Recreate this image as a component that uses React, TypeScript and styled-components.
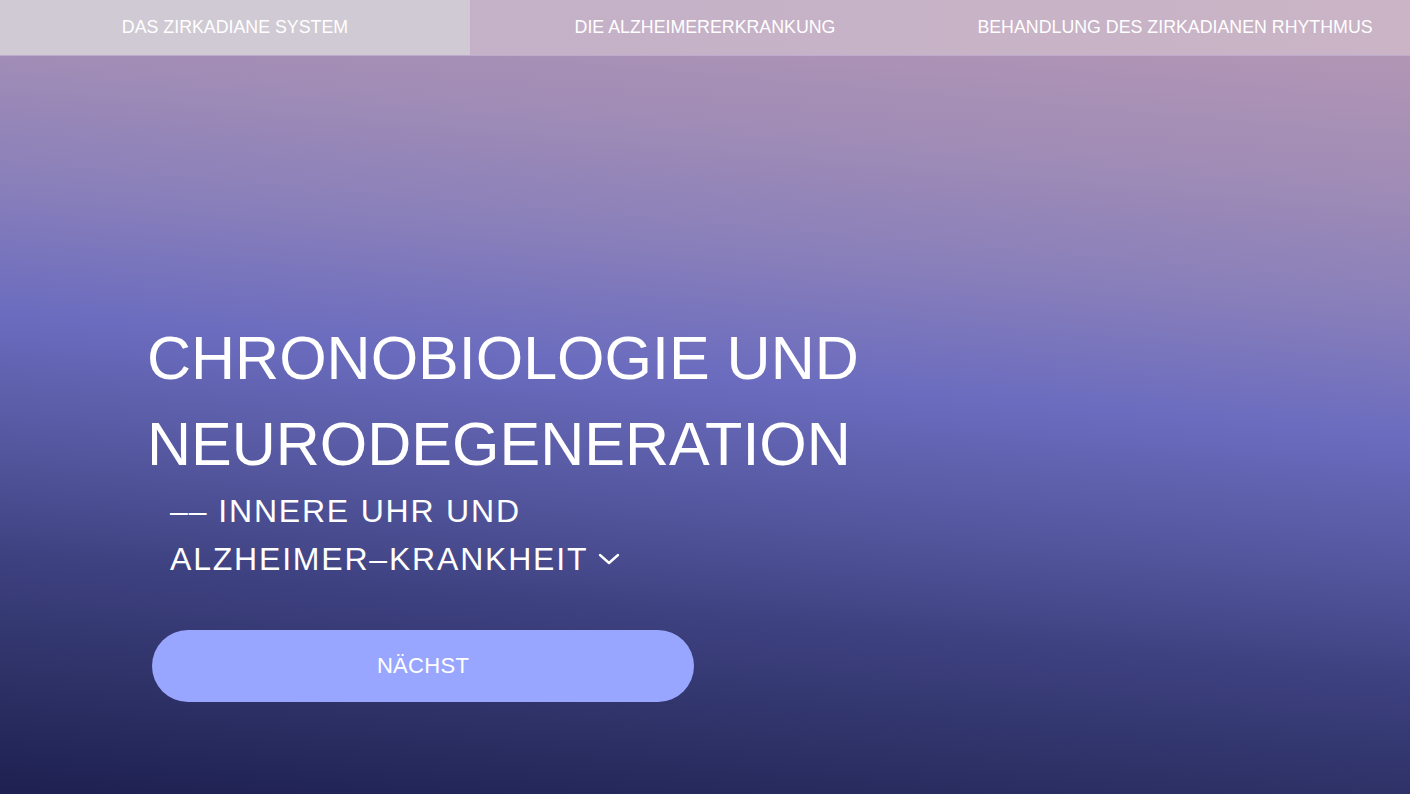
import React from "react";
import styled, { createGlobalStyle } from "styled-components";

const GlobalStyle = createGlobalStyle`
  html, body {
    margin: 0;
    padding: 0;
  }
  body {
    font-family: "Liberation Sans", Arial, sans-serif;
    color: #ffffff;
  }
  * { box-sizing: border-box; }
`;

const Page = styled.div`
  width: 100%;
  height: 794px;
  overflow: hidden;
  display: flex;
  flex-direction: column;
  background: linear-gradient(
    185deg,
    #b698b4 0%,
    #b195b5 7%,
    #a08cb6 20%,
    #8a80ba 33%,
    #6b6cbf 47.6%,
    #54579e 62%,
    #3e4180 74%,
    #2e3267 86.6%,
    #1d2050 100%
  );
`;

const Nav = styled.nav`
  display: grid;
  grid-template-columns: repeat(3, 1fr);
  height: 56px;
  background: linear-gradient(90deg, #c1aec8 0%, #c6b2c7 50%, #cab4c6 100%);
  border-bottom: 1px solid rgba(190, 170, 205, 0.9);
`;

const Tab = styled.a<{ $active?: boolean }>`
  display: flex;
  align-items: center;
  justify-content: center;
  padding-bottom: 1px;
  font-size: 17.8px;
  color: #ffffff;
  text-decoration: none;
  background: ${(p) => (p.$active ? "#cfcad3" : "transparent")};
  cursor: pointer;
`;

const Hero = styled.main`
  display: flex;
  flex-direction: column;
  align-items: flex-start;
  padding: 259px 0 0 147px;
`;

const Title = styled.h1`
  margin: 0;
  font-size: 61px;
  line-height: 86px;
  font-weight: 400;
  color: #ffffff;
`;

const Subtitle = styled.p`
  margin: 0;
  padding-left: 23px;
  font-size: 32px;
  line-height: 48px;
  letter-spacing: 1.8px;
  color: #ffffff;
`;

const Dash = styled.span`
  letter-spacing: 1px;
`;

const Chevron = styled.svg`
  display: inline-block;
  width: 22px;
  height: 14px;
  margin-left: 10px;
  vertical-align: 4px;
`;

const NextButton = styled.button`
  margin: 47px 0 0 5px;
  width: 542px;
  height: 72px;
  border: none;
  border-radius: 36px;
  background: #99a6ff;
  color: #ffffff;
  font-family: "Liberation Sans", Arial, sans-serif;
  font-size: 22px;
  letter-spacing: 0.3px;
  cursor: pointer;
  padding: 0 0 1px 0;
`;

export default function App() {
  return (
    <>
      <GlobalStyle />
      <Page>
        <Nav>
          <Tab $active>DAS ZIRKADIANE SYSTEM</Tab>
          <Tab>DIE ALZHEIMERERKRANKUNG</Tab>
          <Tab>BEHANDLUNG DES ZIRKADIANEN RHYTHMUS</Tab>
        </Nav>
        <Hero>
          <Title>
            CHRONOBIOLOGIE UND
            <br />
            NEURODEGENERATION
          </Title>
          <Subtitle>
            <Dash>––</Dash> INNERE UHR UND
            <br />
            ALZHEIMER–KRANKHEIT
            <Chevron viewBox="0 0 22 14" aria-hidden="true">
              <path
                d="M2 3 L11 11 L20 3"
                fill="none"
                stroke="#ffffff"
                strokeWidth="2.4"
                strokeLinecap="round"
                strokeLinejoin="round"
              />
            </Chevron>
          </Subtitle>
          <NextButton>NÄCHST</NextButton>
        </Hero>
      </Page>
    </>
  );
}
